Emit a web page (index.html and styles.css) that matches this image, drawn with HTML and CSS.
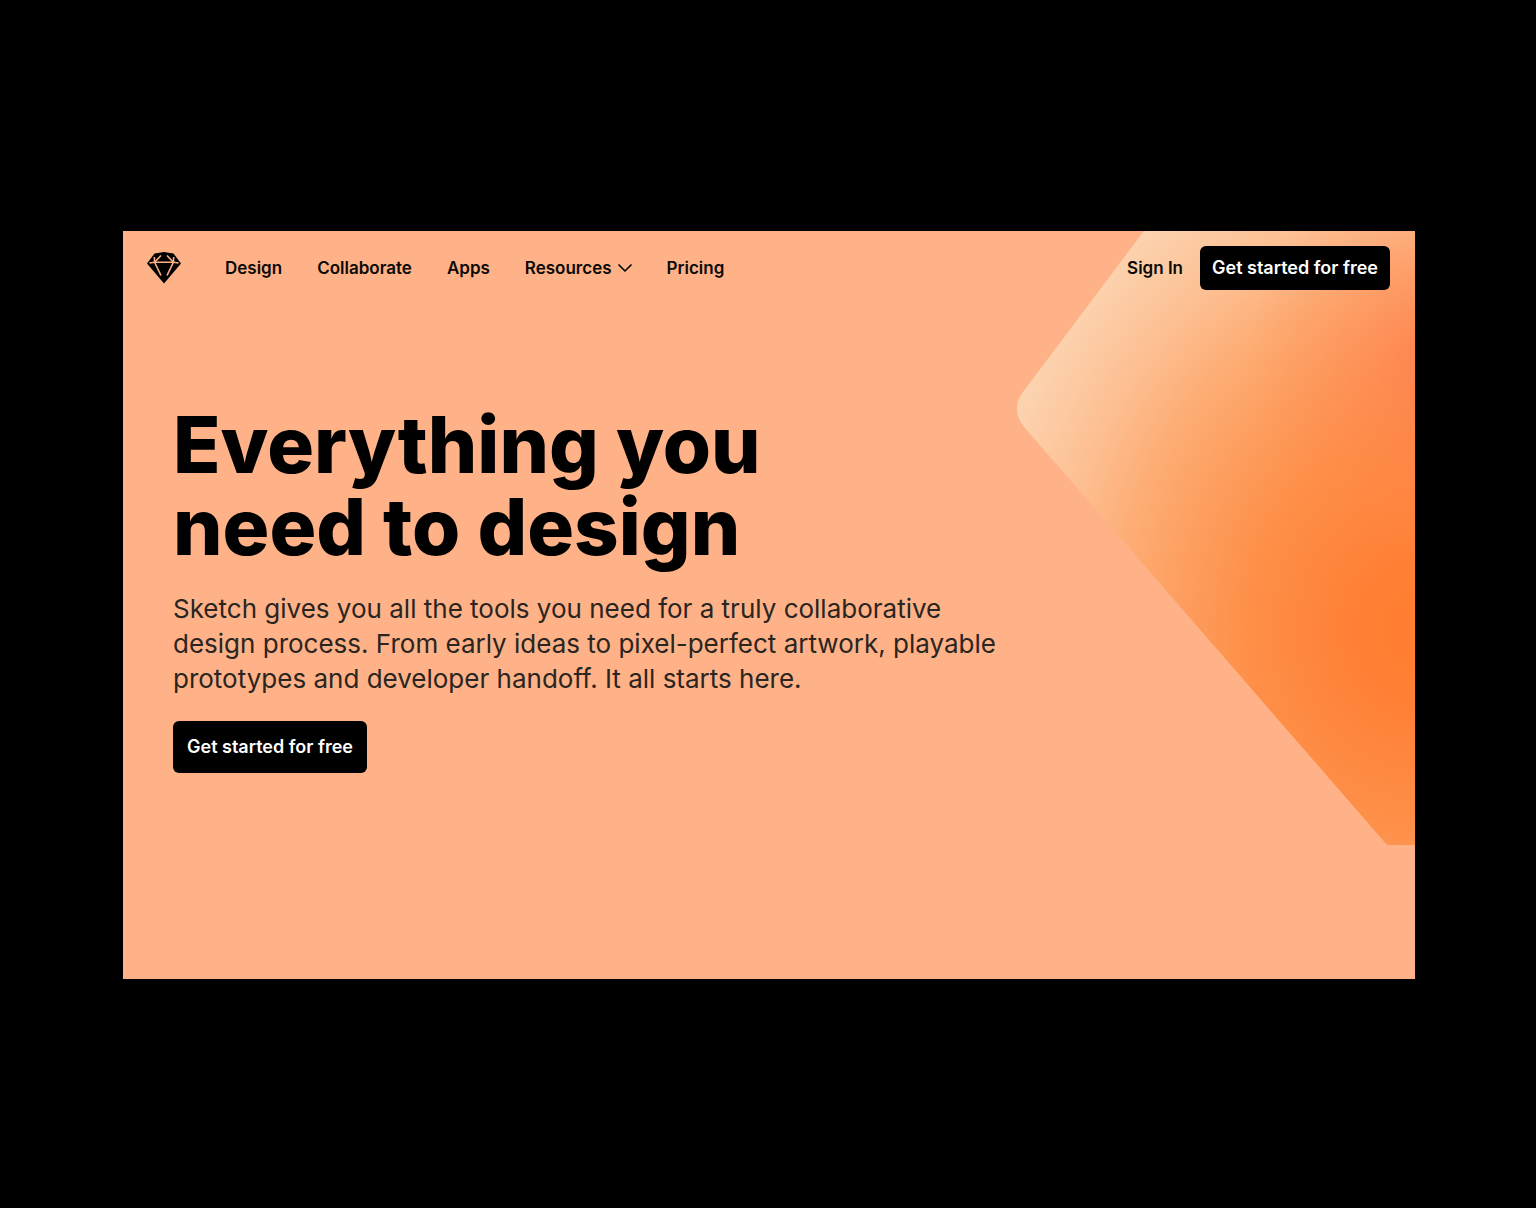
FILE: index.html
```html
<!DOCTYPE html>
<html lang="en">
  <head>
    <meta charset="UTF-8" />
    <meta name="viewport" content="width=device-width, initial-scale=1" />
    <title>Sketch</title>
    <link rel="stylesheet" href="styles.css">
  </head>
  <body>
    <div class="hero">
      <svg class="hero-art" width="398" height="614" viewBox="0 0 398 614" aria-hidden="true">
        <defs>
          <radialGradient id="glow" gradientUnits="userSpaceOnUse" cx="0" cy="0" r="440" gradientTransform="translate(400 400) scale(1 1.15)">
            <stop offset="0" stop-color="#ff7d2e" />
            <stop offset="0.15" stop-color="#ff8036" />
            <stop offset="0.38" stop-color="#fe8f48" />
            <stop offset="0.52" stop-color="#fd9c5c" />
            <stop offset="0.68" stop-color="#fdad75" />
            <stop offset="0.82" stop-color="#fdbf92" />
            <stop offset="1" stop-color="#fcd3af" />
          </radialGradient>
          <radialGradient id="blush" gradientUnits="userSpaceOnUse" cx="440" cy="130" r="210">
            <stop offset="0" stop-color="#ff7446" stop-opacity="0.8" />
            <stop offset="0.4" stop-color="#ff7a48" stop-opacity="0.4" />
            <stop offset="1" stop-color="#ff8a50" stop-opacity="0" />
          </radialGradient>
        </defs>
        <path fill="url(#glow)" d="M127 0H398V614H370L8 197C-2 186 -3 173 6 161Z" />
        <path fill="url(#blush)" d="M200 0H398V345H200Z" />
      </svg>

      <header class="topbar">
        <a class="logo" href="#" aria-label="Sketch home">
          <svg width="34" height="32" viewBox="0 0 34 32">
            <path d="M7.5 1.5L17 0L26.5 1.5L34 11.5L17 31.5L0 11.5Z" />
            <g class="logo-lines">
              <path d="M2.500 11L7.500 10.300H26.500L31.500 11" />
              <path d="M7.3 5L7.6 10.3L14 23.5" />
              <path d="M26.7 5L26.4 10.3L20 23.5" />
              <path d="M14 3.5L7.6 10.3M20 3.5L26.4 10.3" />
            </g>
          </svg>
        </a>
        <nav class="nav">
          <a href="#">Design</a>
          <a href="#">Collaborate</a>
          <a href="#">Apps</a>
          <button type="button" class="nav-menu">
            Resources
            <svg width="14" height="8" viewBox="0 0 14 8" aria-hidden="true">
              <path d="M1 1L7 7L13 1" />
            </svg>
          </button>
          <a href="#">Pricing</a>
        </nav>
        <div class="account">
          <a href="#">Sign In</a>
          <a class="btn" href="#">Get started for free</a>
        </div>
      </header>

      <main class="content">
        <h1>Everything you<br>need to design</h1>
        <p>
          Sketch gives you all the tools you need for a truly collaborative<br>
          design process. From early ideas to pixel-perfect artwork, playable<br>
          prototypes and developer handoff. It all starts here.
        </p>
        <a class="btn btn-large" href="#">Get started for free</a>
      </main>
    </div>
  </body>
</html>
```
FILE: styles.css
```css
* {
  box-sizing: border-box;
}
body {
  display: flex;
  min-height: 100vh;
  margin: 0;
  padding: 231px 121px 229px 123px;
  background: #000;
  color: #0b0905;
  font-family: Inter, "Liberation Sans", sans-serif;
}
a {
  color: inherit;
  text-decoration: none;
}
.hero {
  position: relative;
  flex: 1;
  background: #ffb287;
  overflow: hidden;
}
.hero-art {
  position: absolute;
  top: 0;
  right: 0;
}
.topbar {
  position: relative;
  display: flex;
  align-items: center;
  padding: 15px 25px 0 24px;
  font-size: 17px;
  font-weight: 600;
  line-height: 20px;
}
.logo {
  display: flex;
  margin-right: 44px;
}
.logo-lines {
  fill: none;
  stroke: #ffb287;
  stroke-width: 1.6;
}
.nav {
  display: flex;
  align-items: center;
  gap: 35px;
}
.nav-menu {
  display: flex;
  align-items: center;
  gap: 6px;
  padding: 0;
  border: none;
  background: none;
  color: inherit;
  font: inherit;
  cursor: pointer;
}
.nav-menu svg {
  fill: none;
  stroke: currentColor;
  stroke-width: 1.7;
  stroke-linecap: round;
  stroke-linejoin: round;
}
.account {
  display: flex;
  align-items: center;
  gap: 17px;
  margin-left: auto;
}
.btn {
  display: inline-block;
  padding: 12px;
  border-radius: 6px;
  background: #000;
  color: #fff;
  font-size: 18px;
  font-weight: 600;
  line-height: 20px;
}
.btn-large {
  padding: 16px 14px;
}
.content {
  position: relative;
  padding: 114px 50px;
}
h1 {
  margin: 0;
  color: #000;
  font-size: 78px;
  font-weight: 800;
  line-height: 82px;
}
p {
  margin: 23px 0 25px;
  color: #2a2521;
  font-size: 26px;
  line-height: 35px;
}
```
